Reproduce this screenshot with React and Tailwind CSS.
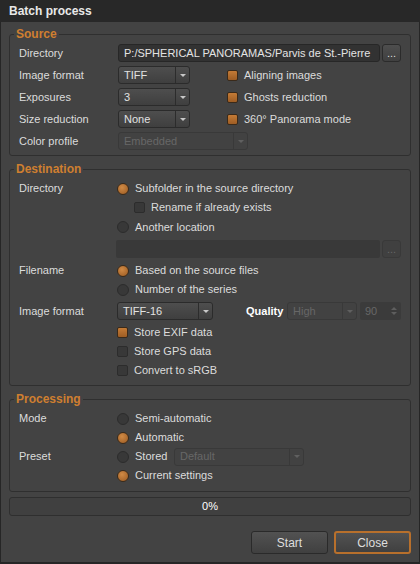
import React from "react";

const font = { fontFamily: '"Liberation Sans", Arial, sans-serif' };

function Arrow({ dim }) {
  return (
    <div
      className={
        "w-0 h-0 border-l-[3px] border-r-[3px] border-t-[3px] border-l-transparent border-r-transparent " +
        (dim ? "border-t-[#606060]" : "border-t-[#c8c8c8]")
      }
    />
  );
}

function Combo({ value, width, disabled }) {
  return (
    <div
      className={
        "flex h-[18px] rounded-[3px] border " +
        (disabled
          ? "border-[#393939] bg-[#424242] text-[#676767]"
          : "border-[#2b2b2b] bg-gradient-to-b from-[#4e4e4e] to-[#3f3f3f] text-[#e2e2e2]")
      }
      style={{ width }}
    >
      <div className="flex-1 flex items-center pl-[5px] leading-none">{value}</div>
      <div
        className={
          "w-[14px] flex items-center justify-center border-l " +
          (disabled ? "border-[#393939]" : "border-[#2c2c2c]")
        }
      >
        <Arrow dim={disabled} />
      </div>
    </div>
  );
}

function Check({ checked, label }) {
  return (
    <div className="flex items-center gap-[6px]">
      <div
        className={
          "w-[11px] h-[11px] rounded-[2px] border " +
          (checked
            ? "border-[#3a2a1a] bg-gradient-to-b from-[#c47b36] to-[#9e5d24]"
            : "border-[#2c2c2c] bg-[#383838]")
        }
      />
      <span>{label}</span>
    </div>
  );
}

function Radio({ checked, label }) {
  return (
    <div className="flex items-center gap-[6px]">
      <div
        className={
          "w-[12px] h-[12px] rounded-full border " +
          (checked
            ? "border-[#3a2a1a] bg-[radial-gradient(circle_at_40%_35%,#d08a45,#9a5a22)]"
            : "border-[#2c2c2c] bg-[#383838]")
        }
      />
      <span>{label}</span>
    </div>
  );
}

function DotsButton({ disabled }) {
  return (
    <div
      className={
        "w-[19px] h-[18px] rounded-[3px] border flex items-center justify-center leading-none " +
        (disabled
          ? "border-[#393939] bg-[#404040] text-[#666]"
          : "border-[#2b2b2b] bg-gradient-to-b from-[#4e4e4e] to-[#404040] text-[#ddd]")
      }
    >
      ...
    </div>
  );
}

function Group({ title, children, className }) {
  return (
    <fieldset
      className={
        "border border-[#2f2f2f] rounded-[3px] px-[9px] " + (className || "")
      }
    >
      <legend className="-ml-[5px] px-[2px] text-[12px] leading-[14px] font-bold text-[#cf7f30]">
        {title}
      </legend>
      {children}
    </fieldset>
  );
}

export default function App() {
  return (
    <div
      className="w-[420px] h-[564px] flex flex-col bg-[#282828] text-[11px] text-[#dcdcdc]"
      style={font}
    >
      <div className="h-[22px] shrink-0 flex items-center pl-[9px] font-bold text-[12px] text-[#e8e8e8]">
        Batch process
      </div>

      <div className="flex-1 flex flex-col bg-[#434343] border-x border-b-2 border-[#262626] px-[8px]">
        <Group title="Source" className="mt-[5px] pt-[3px] pb-[5px]">
          <div className="flex flex-col gap-[4px]">
            <div className="flex items-center h-[18px]">
              <div className="w-[99px] shrink-0">Directory</div>
              <div className="flex-1 h-[18px] rounded-[3px] border border-[#272727] bg-[#323232] text-[#e4e4e4] flex items-center pl-[5px] whitespace-nowrap overflow-hidden">
                P:/SPHERICAL PANORAMAS/Parvis de St.-Pierre
              </div>
              <div className="ml-[2px]">
                <DotsButton />
              </div>
            </div>
            <div className="flex items-center h-[18px]">
              <div className="w-[99px] shrink-0">Image format</div>
              <Combo value="TIFF" width={72} />
              <div className="ml-[37px]">
                <Check checked label="Aligning images" />
              </div>
            </div>
            <div className="flex items-center h-[18px]">
              <div className="w-[99px] shrink-0">Exposures</div>
              <Combo value="3" width={72} />
              <div className="ml-[37px]">
                <Check checked label="Ghosts reduction" />
              </div>
            </div>
            <div className="flex items-center h-[18px]">
              <div className="w-[99px] shrink-0">Size reduction</div>
              <Combo value="None" width={72} />
              <div className="ml-[37px]">
                <Check checked label="360° Panorama mode" />
              </div>
            </div>
            <div className="flex items-center h-[18px]">
              <div className="w-[99px] shrink-0">Color profile</div>
              <Combo value="Embedded" width={130} disabled />
            </div>
          </div>
        </Group>

        <Group title="Destination" className="mt-[6px] pt-[3px] pb-[6px]">
          <div className="flex flex-col">
            <div className="flex items-center h-[19px]">
              <div className="w-[98px] shrink-0">Directory</div>
              <Radio checked label="Subfolder in the source directory" />
            </div>
            <div className="flex items-center h-[19px] pl-[115px]">
              <Check label="Rename if already exists" />
            </div>
            <div className="flex items-center h-[20px] pl-[98px]">
              <Radio label="Another location" />
            </div>
            <div className="flex items-center h-[18px] mt-[3px] pl-[97px]">
              <div className="flex-1 h-[18px] rounded-[2px] bg-[#393939]" />
              <div className="ml-[2px]">
                <DotsButton disabled />
              </div>
            </div>
            <div className="flex items-center h-[19px] mt-[3px]">
              <div className="w-[98px] shrink-0">Filename</div>
              <Radio checked label="Based on the source files" />
            </div>
            <div className="flex items-center h-[19px] pl-[98px]">
              <Radio label="Number of the series" />
            </div>
            <div className="flex items-center h-[18px] mt-[3px]">
              <div className="w-[98px] shrink-0">Image format</div>
              <Combo value="TIFF-16" width={96} />
              <div className="ml-[33px] w-[41px] font-bold text-white">Quality</div>
              <Combo value="High" width={70} disabled />
              <div className="ml-[3px] w-[41px] h-[18px] rounded-[2px] bg-[#3b3b3b] flex items-center justify-between pl-[5px] pr-[4px] text-[#676767]">
                <span>90</span>
                <div className="flex flex-col gap-[2px]">
                  <div className="w-0 h-0 border-l-[3px] border-r-[3px] border-b-[3px] border-l-transparent border-r-transparent border-b-[#5e5e5e]" />
                  <div className="w-0 h-0 border-l-[3px] border-r-[3px] border-t-[3px] border-l-transparent border-r-transparent border-t-[#5e5e5e]" />
                </div>
              </div>
            </div>
            <div className="flex items-center h-[18px] mt-[3px] pl-[98px]">
              <Check checked label="Store EXIF data" />
            </div>
            <div className="flex items-center h-[18px] mt-[1px] pl-[98px]">
              <Check label="Store GPS data" />
            </div>
            <div className="flex items-center h-[18px] mt-[1px] pl-[98px]">
              <Check label="Convert to sRGB" />
            </div>
          </div>
        </Group>

        <Group title="Processing" className="mt-[6px] pt-[3px] pb-[6px]">
          <div className="flex flex-col">
            <div className="flex items-center h-[19px]">
              <div className="w-[98px] shrink-0">Mode</div>
              <Radio label="Semi-automatic" />
            </div>
            <div className="flex items-center h-[19px] pl-[98px]">
              <Radio checked label="Automatic" />
            </div>
            <div className="flex items-center h-[19px]">
              <div className="w-[98px] shrink-0">Preset</div>
              <div className="w-[57px]">
                <Radio label="Stored" />
              </div>
              <Combo value="Default" width={130} disabled />
            </div>
            <div className="flex items-center h-[19px] pl-[98px]">
              <Radio checked label="Current settings" />
            </div>
          </div>
        </Group>

        <div className="mt-[5px] h-[19px] rounded-[3px] border border-[#2f2f2f] bg-[#404040] flex items-center justify-center text-white">
          0%
        </div>

        <div className="mt-[15px] flex justify-end gap-[6px]">
          <button className="w-[77px] h-[23px] rounded-[3px] border border-[#2a2a2a] bg-gradient-to-b from-[#525252] to-[#404040] text-[#dedede] text-[12px]">
            Start
          </button>
          <button className="w-[77px] h-[23px] rounded-[3px] border-2 border-[#b8702c] bg-gradient-to-b from-[#525252] to-[#404040] text-[#dedede] text-[12px]">
            Close
          </button>
        </div>
      </div>
    </div>
  );
}
